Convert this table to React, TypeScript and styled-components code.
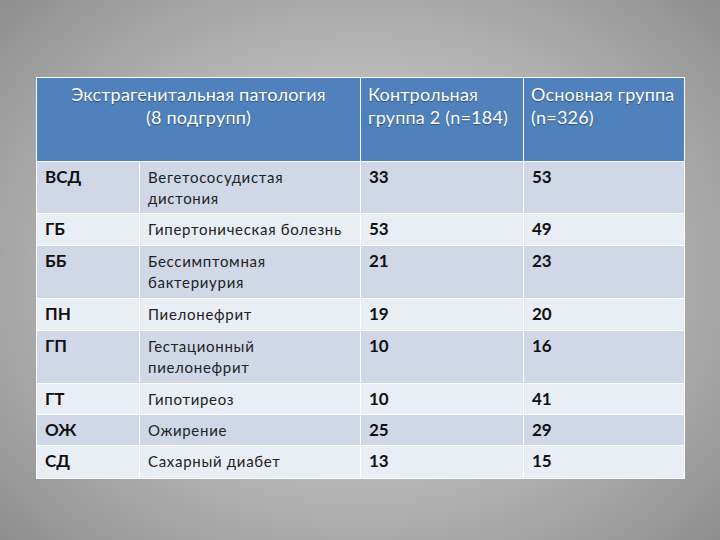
import styled, { createGlobalStyle } from 'styled-components';

const GlobalStyle = createGlobalStyle`
  html, body {
    margin: 0;
    padding: 0;
  }
  body {
    font-family: Lato, 'Noto Sans', sans-serif;
  }
`;

const Slide = styled.div`
  width: 720px;
  height: 540px;
  box-sizing: border-box;
  padding: 77px 36px 0 36px;
  background: radial-gradient(ellipse 70% 75% at 50% 50%, #d6d6d6 0%, #c0c0c0 40%, #9a9a9a 85%, #8b8b8b 100%);
`;

const Table = styled.table`
  width: 648px;
  border-collapse: collapse;
  table-layout: fixed;
`;

const HeadCell = styled.th<{ $center?: boolean }>`
  background: #4f81bd;
  color: #fff;
  font-weight: 400;
  font-size: 18px;
  line-height: 23px;
  letter-spacing: 0.2px;
  text-align: ${(p) => (p.$center ? 'center' : 'left')};
  vertical-align: top;
  padding: 5px 7px 0 7px;
  height: 78px;
  border: 1.5px solid #fff;
  text-shadow: 0 1px 1px rgba(0, 0, 0, 0.4);
`;

const Row = styled.tr<{ $odd: boolean; $h: number }>`
  background: ${(p) => (p.$odd ? '#d0d8e8' : '#e9edf4')};
  height: ${(p) => p.$h}px;
`;

const Cell = styled.td<{ $bold?: boolean }>`
  vertical-align: top;
  padding: ${(p) => (p.$bold ? '4px 8px 0 8px' : '5px 8px 0 8px')};
  font-size: ${(p) => (p.$bold ? '17px' : '15px')};
  line-height: ${(p) => (p.$bold ? '21px' : '21px')};
  letter-spacing: ${(p) => (p.$bold ? '0' : '0.7px')};
  font-weight: ${(p) => (p.$bold ? 700 : 400)};
  color: ${(p) => (p.$bold ? '#111' : '#222')};
  border: 1.5px solid #fff;
  box-sizing: border-box;
`;

const rows = [
  ['ВСД', 'Вегетососудистая дистония', '33', '53', 52],
  ['ГБ', 'Гипертоническая болезнь', '53', '49', 32],
  ['ББ', 'Бессимптомная бактериурия', '21', '23', 53],
  ['ПН', 'Пиелонефрит', '19', '20', 32],
  ['ГП', 'Гестационный пиелонефрит', '10', '16', 53],
  ['ГТ', 'Гипотиреоз', '10', '41', 31],
  ['ОЖ', 'Ожирение', '25', '29', 31],
  ['СД', 'Сахарный диабет', '13', '15', 33],
] as const;

export default function App() {
  return (
    <>
      <GlobalStyle />
      <Slide>
        <Table>
          <colgroup>
            <col style={{ width: 103 }} />
            <col style={{ width: 221 }} />
            <col style={{ width: 163 }} />
            <col style={{ width: 161 }} />
          </colgroup>
          <thead>
            <tr>
              <HeadCell colSpan={2} $center>
                Экстрагенитальная патология
                <br />
                (8 подгрупп)
              </HeadCell>
              <HeadCell>Контрольная группа 2 (n=184)</HeadCell>
              <HeadCell>Основная группа (n=326)</HeadCell>
            </tr>
          </thead>
          <tbody>
            {rows.map(([code, name, a, b, h], i) => (
              <Row key={code} $odd={i % 2 === 0} $h={h}>
                <Cell $bold>{code}</Cell>
                <Cell>{name}</Cell>
                <Cell $bold>{a}</Cell>
                <Cell $bold>{b}</Cell>
              </Row>
            ))}
          </tbody>
        </Table>
      </Slide>
    </>
  );
}
